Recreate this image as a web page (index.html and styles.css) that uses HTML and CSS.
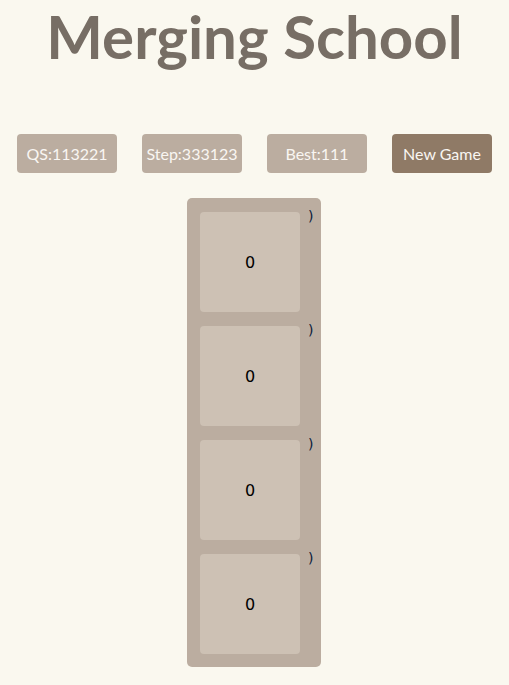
FILE: index.html
```html
<!DOCTYPE html>
<html>
<head>
<meta charset="utf-8">
<link rel="stylesheet" href="styles.css">
</head>
<body>
<h1 class="title">Merging School</h1>
<div class="controls">
  <div class="btn">QS:113221</div>
  <div class="btn">Step:333123</div>
  <div class="btn">Best:111</div>
  <div class="btn btn-new">New Game</div>
</div>
<div class="board">
  <div class="row"><div class="tile">0</div><span class="mark">)</span></div>
  <div class="row"><div class="tile">0</div><span class="mark">)</span></div>
  <div class="row"><div class="tile">0</div><span class="mark">)</span></div>
  <div class="row"><div class="tile">0</div><span class="mark">)</span></div>
</div>
</body>
</html>
```

FILE: styles.css
```css
html, body {
  margin: 0;
  padding: 0;
  background: #faf8ef;
}
body {
  font-family: "Lato", "Noto Sans", sans-serif;
}
.title {
  margin: 0;
  padding-top: 0;
  height: 100px;
  text-align: center;
  font-size: 60px;
  line-height: 72px;
  font-weight: bold;
  color: #776e65;
}
.controls {
  display: flex;
  justify-content: center;
  gap: 25px;
  margin-top: 34px;
}
.btn {
  width: 100px;
  height: 39px;
  box-sizing: border-box;
  display: flex;
  align-items: center;
  justify-content: center;
  background: #bbada0;
  color: #f9f6f2;
  border-radius: 4px;
  font-size: 16px;
}
.btn-new {
  background: #8f7a66;
}
.board {
  width: 134px;
  box-sizing: border-box;
  margin: 25px 0 0 187px;
  padding: 14px 21px 13px 13px;
  background: #bbada0;
  border-radius: 5px;
  display: flex;
  flex-direction: column;
  gap: 14px;
}
.row {
  display: flex;
  align-items: flex-start;
}
.tile {
  width: 100px;
  height: 100px;
  flex: none;
  background: #cdc1b4;
  border-radius: 4px;
  display: flex;
  align-items: center;
  justify-content: center;
  font-family: "DejaVu Sans", sans-serif;
  font-size: 16px;
  color: #000;
}
.mark {
  width: 0;
  margin-left: 8px;
  margin-top: -4px;
  font-family: "DejaVu Sans", sans-serif;
  font-size: 14px;
  color: #0a1a3a;
}
```
